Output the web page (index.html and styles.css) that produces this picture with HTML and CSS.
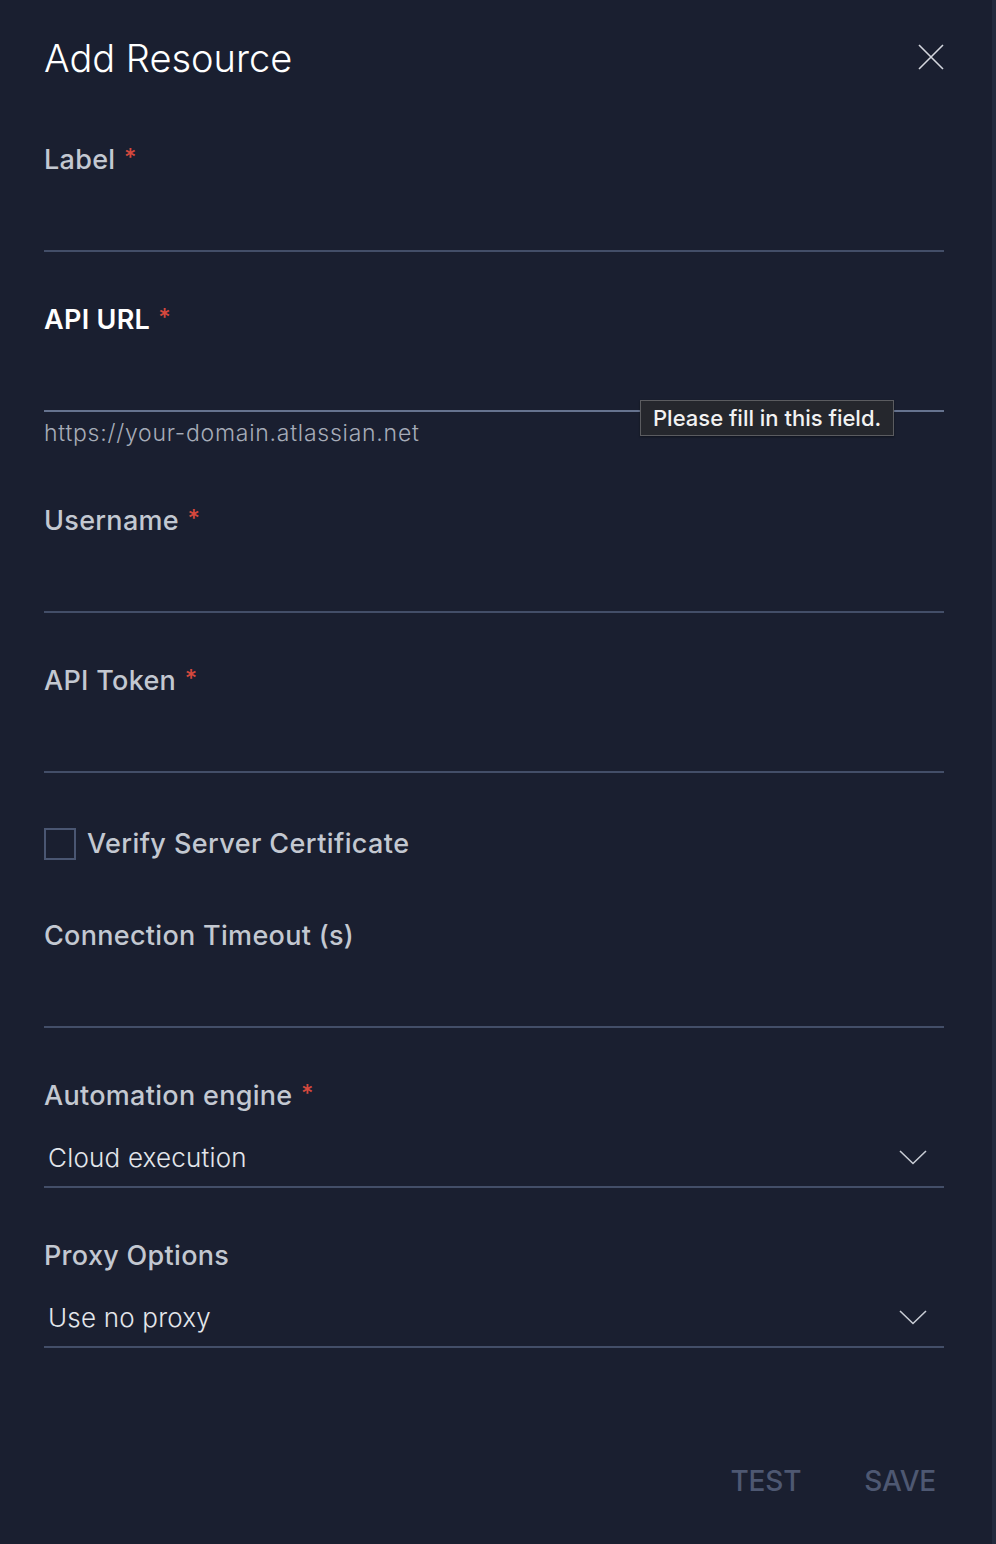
FILE: index.html
```html
<!DOCTYPE html>
<html>
<head>
<meta charset="utf-8">
<link rel="stylesheet" href="styles.css">
</head>
<body>
<div class="dialog">
  <div class="header">
    <h1 class="title">Add Resource</h1>
    <button class="close" aria-label="Close">
      <svg width="26" height="26" viewBox="0 0 26 26"><path d="M1 1 L25 25 M25 1 L1 25" stroke="#d4d7de" stroke-width="1.6" fill="none"/></svg>
    </button>
  </div>

  <div class="field">
    <label class="label">Label <span class="req">*</span></label>
    <div class="input"></div>
  </div>

  <div class="field field-focus">
    <label class="label">API URL <span class="req">*</span></label>
    <div class="input"></div>
    <div class="helper">https://your-domain.atlassian.net</div>
    <div class="tooltip">Please fill in this field.</div>
  </div>

  <div class="field">
    <label class="label">Username <span class="req">*</span></label>
    <div class="input"></div>
  </div>

  <div class="field">
    <label class="label">API Token <span class="req">*</span></label>
    <div class="input"></div>
  </div>

  <div class="check-row">
    <span class="checkbox"></span>
    <span class="check-label">Verify Server Certificate</span>
  </div>

  <div class="field">
    <label class="label">Connection Timeout (s)</label>
    <div class="input"></div>
  </div>

  <div class="field">
    <label class="label">Automation engine <span class="req">*</span></label>
    <div class="input select">
      <span class="value">Cloud execution</span>
      <svg class="chev" width="28" height="15" viewBox="0 0 28 15"><path d="M1 1 L14 13.5 L27 1" stroke="#c9cdd5" stroke-width="1.6" fill="none"/></svg>
    </div>
  </div>

  <div class="field">
    <label class="label">Proxy Options</label>
    <div class="input select">
      <span class="value">Use no proxy</span>
      <svg class="chev" width="28" height="15" viewBox="0 0 28 15"><path d="M1 1 L14 13.5 L27 1" stroke="#c9cdd5" stroke-width="1.6" fill="none"/></svg>
    </div>
  </div>

  <div class="actions">
    <button class="btn">TEST</button>
    <button class="btn">SAVE</button>
  </div>
</div>
</body>
</html>
```

FILE: styles.css
```css
html, body {
  margin: 0;
  padding: 0;
  background: #1a1f30;
}
body {
  font-family: Inter, "Open Sans", sans-serif;
  width: 996px;
  height: 1544px;
  overflow: hidden;
  border-right: 4px solid #232a3d;
  box-sizing: border-box;
}
.dialog {
  padding: 0 48px 0 44px;
  width: 900px;
}
.header {
  display: flex;
  justify-content: space-between;
  align-items: flex-start;
  height: 92px;
}
.title {
  margin: 0;
  padding-top: 34px;
  font-size: 38px;
  line-height: 48px;
  font-weight: 300;
  color: #ffffff;
  letter-spacing: 0;
}
.close {
  background: none;
  border: 0;
  padding: 0;
  margin-top: 44px;
  margin-right: 0;
  width: 26px;
  height: 26px;
}
.field {
  position: relative;
  margin-top: 51px;
}
.label {
  display: block;
  height: 34px;
  font-size: 27px;
  line-height: 34px;
  font-weight: 500;
  color: #c3c8d1;
  letter-spacing: 0.3px;
}
.field-focus .label {
  color: #ffffff;
  font-weight: 600;
}
.req {
  color: #d5483d;
  font-weight: 500;
  font-size: 24px;
  line-height: 0;
  vertical-align: 3px;
  margin-left: 1px;
}
.input {
  height: 73px;
  border-bottom: 2px solid #434e68;
  box-sizing: content-box;
}
.field-focus .input {
  border-bottom-color: #66738f;
}
.helper {
  margin-top: 7px;
  font-size: 23px;
  line-height: 28px;
  font-weight: 300;
  color: #a6acb8;
  letter-spacing: 0.75px;
  margin-bottom: 57px;
}
.field-focus + .field {
  margin-top: 0;
}
.tooltip {
  position: absolute;
  left: 596px;
  top: 97px;
  height: 34px;
  padding: 0 12px;
  background: #25272d;
  border: 1px solid #5b5c60;
  color: #f2f2f2;
  font-size: 22px;
  line-height: 34px;
  font-weight: 500;
  white-space: nowrap;
  box-shadow: 0 1px 2px rgba(0,0,0,0.4);
}
.check-row {
  display: flex;
  align-items: center;
  gap: 11px;
  margin-top: 55px;
  height: 32px;
}
.checkbox {
  width: 28px;
  height: 28px;
  border: 2px solid #4a5672;
  flex: none;
}
.check-label {
  font-size: 27px;
  line-height: 32px;
  font-weight: 500;
  color: #c3c8d1;
  letter-spacing: 0.4px;
}
.check-row + .field {
  margin-top: 59px;
}
.select {
  display: flex;
  align-items: center;
  justify-content: space-between;
  padding-left: 4px;
  padding-right: 17px;
  height: 73px;
}
.value {
  font-size: 26px;
  font-weight: 300;
  color: #e3e6eb;
  letter-spacing: 0.2px;
  margin-top: 16px;
}
.chev {
  margin-top: 16px;
}
.actions {
  display: flex;
  justify-content: flex-end;
  gap: 47px;
  margin-top: 116px;
  padding-right: 0;
}
.btn {
  background: none;
  border: 0;
  padding: 0 8px;
  font-family: Inter, sans-serif;
  font-size: 28px;
  line-height: 34px;
  font-weight: 500;
  color: #4e5872;
  letter-spacing: -0.2px;
}
```
